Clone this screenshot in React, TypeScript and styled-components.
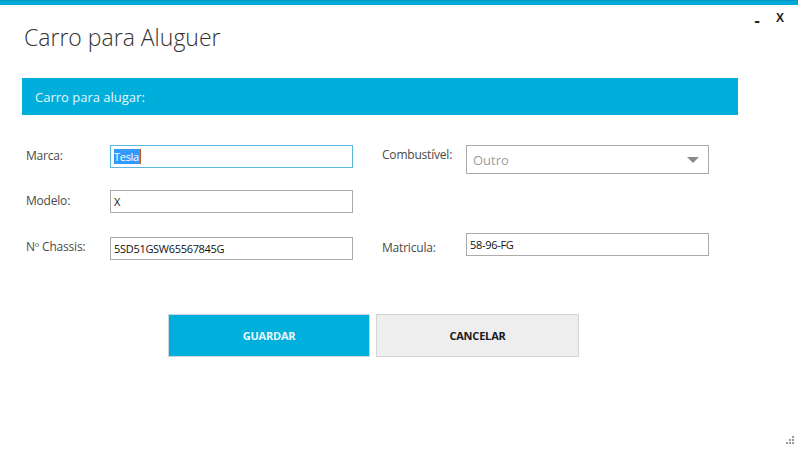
import React from "react";
import styled, { createGlobalStyle } from "styled-components";

const Global = createGlobalStyle`
  html, body { margin: 0; padding: 0; background: #ffffff; }
  body { font-family: "Segoe UI", "Open Sans", "Noto Sans", sans-serif; }
  * { box-sizing: border-box; }
`;

const Window = styled.div`
  position: relative;
  width: 798px;
  height: 450px;
  background: #ffffff;
  overflow: hidden;
`;

const TopBar = styled.div`
  height: 5px;
  background: #00a9d8;
  border-top: 1px solid #0097c2;
`;

const TitleRow = styled.div`
  display: flex;
  justify-content: space-between;
  align-items: flex-start;
  height: 73px;
`;

const Title = styled.h1`
  margin: 17px 0 0 24px;
  font-family: "Open Sans", sans-serif;
  font-weight: 300;
  font-size: 23px;
  line-height: 30px;
  color: #333333;
  letter-spacing: 0;
`;

const Controls = styled.div`
  display: flex;
  gap: 16px;
  margin: 5px 14px 0 0;
  font-family: "Liberation Sans", sans-serif;
  font-weight: 700;
  color: #222222;
`;

const Ctrl = styled.span<{ $down?: number; $size?: number }>`
  display: block;
  margin-top: ${(p) => p.$down ?? 0}px;
  font-size: ${(p) => p.$size ?? 12}px;
  line-height: 16px;
`;

const Band = styled.div`
  margin: 0 60px 0 22px;
  height: 37px;
  background: #00aedb;
  display: flex;
  align-items: center;
  padding-left: 13px;
  font-family: "Open Sans", sans-serif;
  font-size: 13px;
  color: #e6f6fb;
`;

const Form = styled.div`
  display: grid;
  grid-template-columns: 84px 243px 29px 84px 243px;
  grid-template-rows: 45px 43px 40px;
  margin: 30px 0 0 26px;
  align-items: start;
`;

const Label = styled.div<{ $down?: number }>`
  font-family: "Open Sans", sans-serif;
  font-size: 12px;
  line-height: 16px;
  color: #4a4a4a;
  margin-top: ${(p) => p.$down ?? 3}px;
  white-space: nowrap;
  letter-spacing: -0.2px;
`;

const Field = styled.div<{ $focus?: boolean; $down?: number }>`
  height: 23px;
  margin-top: ${(p) => p.$down ?? 0}px;
  border: 1px solid ${(p) => (p.$focus ? "#5ab6df" : "#ababab")};
  display: flex;
  align-items: center;
  padding-left: 3px;
  font-family: "Open Sans", sans-serif;
  font-size: 11px;
  color: #111111;
  letter-spacing: -0.3px;
`;

const Selected = styled.span`
  background: #3399ff;
  color: #ffffff;
  line-height: 15px;
  padding-right: 1px;
  border-right: 1px solid #c05a2a;
`;

const Combo = styled.div`
  height: 29px;
  border: 1px solid #ababab;
  display: flex;
  align-items: center;
  justify-content: space-between;
  padding: 0 9px 0 6px;
  font-family: "Open Sans", sans-serif;
  font-size: 13px;
  color: #9d9d9d;
`;

const Gap = styled.div``;

const Buttons = styled.div`
  display: flex;
  gap: 6px;
  margin: 41px 0 0 168px;
`;

const Button = styled.button<{ $primary?: boolean }>`
  width: ${(p) => (p.$primary ? 202 : 203)}px;
  height: 43px;
  border: 1px solid ${(p) => (p.$primary ? "#c9d6db" : "#d4d4d4")};
  background: ${(p) => (p.$primary ? "#00afdb" : "#eeeeee")};
  color: ${(p) => (p.$primary ? "#eaf8fd" : "#1a1a1a")};
  font-family: "Open Sans", sans-serif;
  font-weight: 700;
  font-size: 11px;
  letter-spacing: -0.2px;
  padding: 0;
`;

const Grip = styled.svg`
  position: absolute;
  right: 3px;
  bottom: 5px;
`;

export default function App() {
  return (
    <>
      <Global />
      <Window>
        <TopBar />
        <TitleRow>
          <Title>Carro para Aluguer</Title>
          <Controls>
            <Ctrl $down={3} $size={17}>-</Ctrl>
            <Ctrl $size={12}>X</Ctrl>
          </Controls>
        </TitleRow>
        <Band>Carro para alugar:</Band>
        <Form>
          <Label>Marca:</Label>
          <Field $focus>
            <Selected>Tesla</Selected>
          </Field>
          <Gap />
          <Label $down={2}>Combustível:</Label>
          <Combo>
            <span>Outro</span>
            <svg width="12" height="6" viewBox="0 0 12 6">
              <path d="M0 0 H12 L6 6 Z" fill="#8a8a8a" />
            </svg>
          </Combo>

          <Label>Modelo:</Label>
          <Field>X</Field>
          <Gap />
          <Gap />
          <Gap />

          <Label $down={6}>Nº Chassis:</Label>
          <Field $down={4}>5SD51GSW65567845G</Field>
          <Gap />
          <Label $down={7}>Matricula:</Label>
          <Field>58-96-FG</Field>
        </Form>
        <Buttons>
          <Button $primary>GUARDAR</Button>
          <Button>CANCELAR</Button>
        </Buttons>
        <Grip width="9" height="9" viewBox="0 0 9 9">
          <rect x="6" y="0" width="2" height="2" fill="#9a9a9a" />
          <rect x="3" y="3" width="2" height="2" fill="#9a9a9a" />
          <rect x="6" y="3" width="2" height="2" fill="#9a9a9a" />
          <rect x="0" y="6" width="2" height="2" fill="#9a9a9a" />
          <rect x="3" y="6" width="2" height="2" fill="#9a9a9a" />
          <rect x="6" y="6" width="2" height="2" fill="#9a9a9a" />
        </Grip>
      </Window>
    </>
  );
}
